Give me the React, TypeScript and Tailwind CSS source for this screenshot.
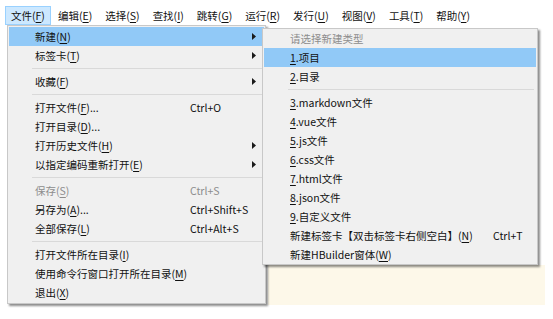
import React from "react";

type Item =
  | { sep: true }
  | {
      sep?: false;
      label: string;
      shortcut?: string;
      arrow?: boolean;
      active?: boolean;
      disabled?: boolean;
      header?: boolean;
    };

const MENUBAR = ["文件(&F)", "编辑(&E)", "选择(&S)", "查找(&I)", "跳转(&G)", "运行(&R)", "发行(&U)", "视图(&V)", "工具(&T)", "帮助(&Y)"];

const FILE_MENU: Item[] = [
  { label: "新建(&N)", arrow: true, active: true },
  { label: "标签卡(&T)", arrow: true },
  { sep: true },
  { label: "收藏(&F)", arrow: true },
  { sep: true },
  { label: "打开文件(&F)...", shortcut: "Ctrl+O" },
  { label: "打开目录(&D)..." },
  { label: "打开历史文件(&H)", arrow: true },
  { label: "以指定编码重新打开(&E)", arrow: true },
  { sep: true },
  { label: "保存(&S)", shortcut: "Ctrl+S", disabled: true },
  { label: "另存为(&A)...", shortcut: "Ctrl+Shift+S" },
  { label: "全部保存(&L)", shortcut: "Ctrl+Alt+S" },
  { sep: true },
  { label: "打开文件所在目录(&I)" },
  { label: "使用命令行窗口打开所在目录(&M)" },
  { label: "退出(&X)" },
];

const NEW_MENU: Item[] = [
  { label: "请选择新建类型", header: true },
  { label: "&1.项目", active: true },
  { label: "&2.目录" },
  { sep: true },
  { label: "&3.markdown文件" },
  { label: "&4.vue文件" },
  { label: "&5.js文件" },
  { label: "&6.css文件" },
  { label: "&7.html文件" },
  { label: "&8.json文件" },
  { label: "&9.自定义文件" },
  { label: "新建标签卡【双击标签卡右侧空白】(&N)", shortcut: "Ctrl+T" },
  { label: "新建HBuilder窗体(&W)" },
];

// "&X" marks the accelerator letter, drawn underlined
function Label({ text }: { text: string }) {
  const i = text.indexOf("&");
  if (i < 0) return <>{text}</>;
  return (
    <>
      {text.slice(0, i)}
      <span className="underline underline-offset-[2px] decoration-[1px]">{text[i + 1]}</span>
      {text.slice(i + 2)}
    </>
  );
}

function Arrow() {
  return (
    <svg width="4" height="7" viewBox="0 0 4 7" className="block">
      <path d="M0 0 L4 3.5 L0 7 Z" fill="#1a1a1a" />
    </svg>
  );
}

function Menu({ items, textWidth, sepInset }: { items: Item[]; textWidth: string; sepInset: string }) {
  return (
    <div className="flex flex-col">
      {items.map((it, idx) =>
        it.sep ? (
          <div key={idx} className="h-[7px] flex items-center pr-[2px]">
            <div className={`${sepInset} flex-1 border-t border-[#d9d9d9]`} />
          </div>
        ) : (
          <div
            key={idx}
            className={`h-[19px] flex items-center pl-[26px] pr-[8px] whitespace-nowrap ${
              it.active ? "bg-[#91c9f7]" : ""
            } ${it.disabled || it.header ? "text-[#8d8d8d]" : "text-[#111]"}`}
          >
            <span className={textWidth}>
              <Label text={it.label} />
            </span>
            <span className="flex-1">{it.shortcut}</span>
            {it.arrow && <Arrow />}
          </div>
        )
      )}
    </div>
  );
}

export default function App() {
  return (
    <div
      className="relative w-[553px] h-[319px] bg-white overflow-hidden text-[10.5px] leading-[19px]"
      style={{ fontFamily: '"Noto Sans CJK SC", "Noto Sans", sans-serif' }}
    >
      <nav className="flex pl-[5px] pt-[6px] gap-[1px] h-[25px]">
        {MENUBAR.map((m, i) => (
          <div
            key={m}
            className={`h-[19px] px-[5px] border text-[#111] whitespace-nowrap ${
              i === 0 ? "bg-[#cce8ff] border-[#99d1ff]" : "border-transparent"
            }`}
          >
            <span className="relative top-[-1px]">
              <Label text={m} />
            </span>
          </div>
        ))}
      </nav>

      {/* editor area peeking from behind the menus */}
      <div className="ml-[268px] mt-[240px] w-[277px] h-[40px] bg-[#fdf8e9]" />

      <div className="absolute left-[7px] top-[25px] w-[259px] bg-[#f0f0f0] border border-[#c8c8c8] p-[1px] shadow-[2px_2px_2px_rgba(0,0,0,0.45)]">
        <Menu items={FILE_MENU} textWidth="w-[155px]" sepInset="ml-[23px]" />
      </div>

      <div className="absolute left-[262px] top-[28px] w-[276px] bg-[#f0f0f0] border border-[#c8c8c8] px-[1px] shadow-[2px_2px_2px_rgba(0,0,0,0.45)]">
        <Menu items={NEW_MENU} textWidth="w-[203px]" sepInset="ml-[24px]" />
      </div>
    </div>
  );
}
